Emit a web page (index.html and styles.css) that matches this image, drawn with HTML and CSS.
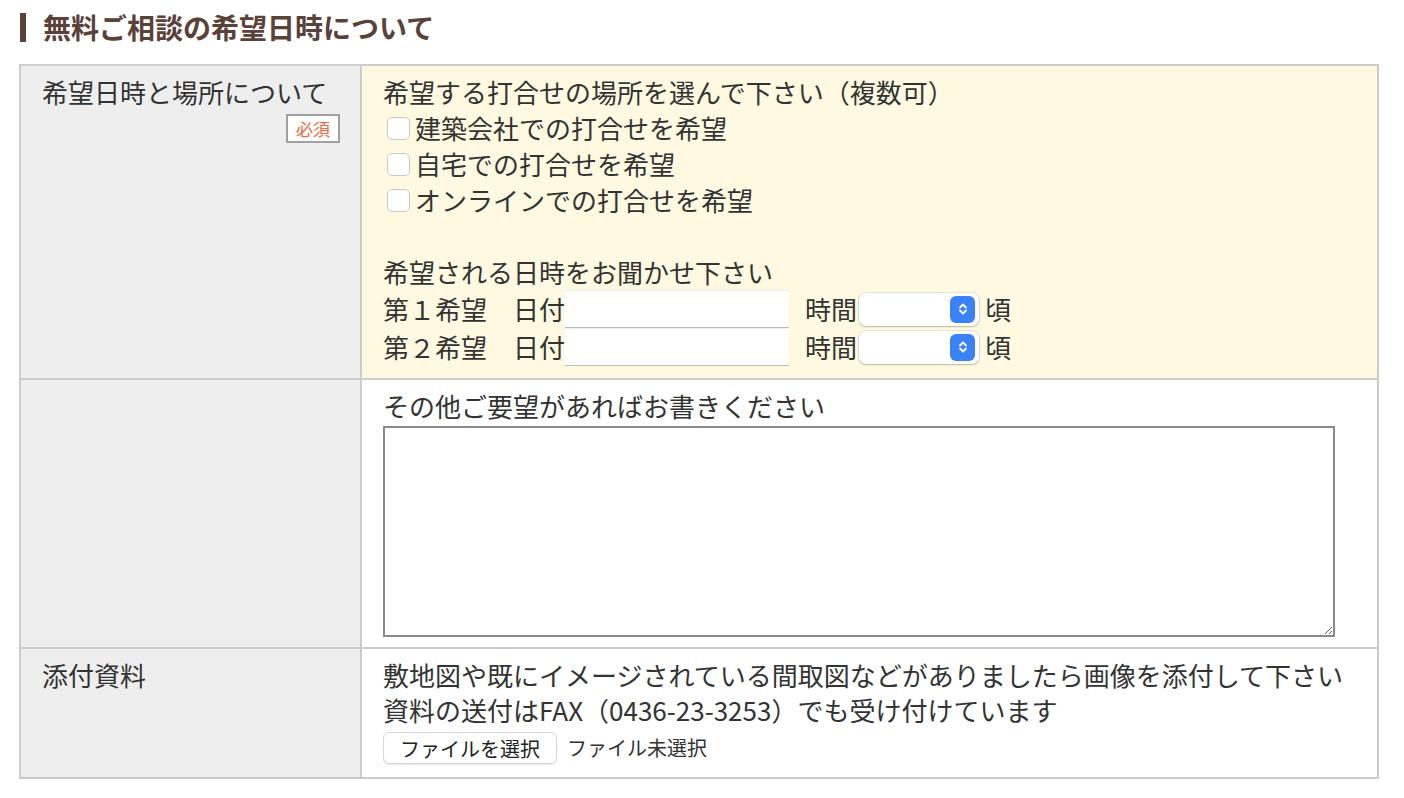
FILE: index.html
```html
<!DOCTYPE html>
<html lang="ja">
<head>
<meta charset="UTF-8" />
<meta name="viewport" content="width=device-width, initial-scale=1" />
<title>無料ご相談の希望日時について</title>
<link rel="stylesheet" href="styles.css">
</head>
<body>

<h2 class="section-title">無料ご相談の希望日時について</h2>

<table class="form-table">
  <tr>
    <th>
      希望日時と場所について
      <div class="req-wrap"><span class="required">必須</span></div>
    </th>
    <td class="highlight">
      <p>希望する打合せの場所を選んで下さい（複数可）</p>
      <label class="check"><input type="checkbox" name="place" />建築会社での打合せを希望</label>
      <label class="check"><input type="checkbox" name="place" />自宅での打合せを希望</label>
      <label class="check"><input type="checkbox" name="place" />オンラインでの打合せを希望</label>
      <p class="blank">&nbsp;</p>
      <p>希望される日時をお聞かせ下さい</p>
      <div class="date-row">
        第１希望　日付<input type="text" class="date-input" /><span class="time-label">時間</span><span class="select-wrap"><select class="time-select"><option></option></select><span class="select-arrow"><svg width="12" height="14" viewBox="0 0 12 14"><path d="M3 5.5 L6 2.5 L9 5.5 M3 8.5 L6 11.5 L9 8.5" fill="none" stroke="#fff" stroke-width="1.8" stroke-linecap="round" stroke-linejoin="round"/></svg></span></span>頃
      </div>
      <div class="date-row">
        第２希望　日付<input type="text" class="date-input" /><span class="time-label">時間</span><span class="select-wrap"><select class="time-select"><option></option></select><span class="select-arrow"><svg width="12" height="14" viewBox="0 0 12 14"><path d="M3 5.5 L6 2.5 L9 5.5 M3 8.5 L6 11.5 L9 8.5" fill="none" stroke="#fff" stroke-width="1.8" stroke-linecap="round" stroke-linejoin="round"/></svg></span></span>頃
      </div>
    </td>
  </tr>
  <tr>
    <th></th>
    <td>
      <p>その他ご要望があればお書きください</p>
      <textarea class="request"></textarea>
    </td>
  </tr>
  <tr>
    <th>添付資料</th>
    <td class="attach">
      <p>敷地図や既にイメージされている間取図などがありましたら画像を添付して下さい</p>
      <p>資料の送付はFAX（0436-23-3253）でも受け付けています</p>
      <div class="file-row">
        <button type="button" class="file-btn">ファイルを選択</button>
        <span class="file-none">ファイル未選択</span>
      </div>
    </td>
  </tr>
</table>

</body>
</html>
```

FILE: styles.css
```css
body {
  font-family: "Noto Sans CJK JP", "Noto Sans", sans-serif;
  color: #333;
  background: #fff;
  margin: 0;
  padding: 13px 0 0 20px;
}
.section-title {
  margin: 0;
  padding-left: 17px;
  border-left: 6px solid #5a4139;
  font-size: 28px;
  line-height: 29px;
  font-weight: bold;
  color: #5a4139;
}
.form-table {
  margin: 22px 0 0 -1px;
  width: 1360px;
  border-collapse: collapse;
  border: 2px solid #ccc;
  font-size: 26px;
  line-height: 36px;
}
.form-table th,
.form-table td {
  border: 2px solid #ccc;
  vertical-align: top;
  text-align: left;
}
.form-table th {
  width: 298px;
  background: #eee;
  font-weight: normal;
  padding: 8px 20px 10px 21px;
}
.form-table td {
  padding: 8px 19px 10px 21px;
}
.form-table td.highlight {
  background: #fef9e0;
  padding-bottom: 12px;
}
.form-table p {
  margin: 0;
}
.req-wrap {
  text-align: right;
  margin-top: 4px;
  line-height: 0;
}
.required {
  display: inline-block;
  width: 50px;
  height: 25px;
  line-height: 25px;
  text-align: center;
  background: #fff;
  border: 2px solid #a0a0a0;
  color: #f4663a;
  font-size: 17px;
}
.check {
  display: flex;
  align-items: center;
}
.check input {
  appearance: none;
  -webkit-appearance: none;
  width: 23px;
  height: 23px;
  margin: 0 5px 0 4px;
  border: 1px solid #c8c8c8;
  border-radius: 5px;
  background: #fff;
}
.date-row {
  display: flex;
  align-items: center;
  height: 38px;
}
.date-input {
  width: 224px;
  height: 38px;
  box-sizing: border-box;
  border: none;
  border-top: 1px solid #eee;
  border-bottom: 1px solid #bbb;
  background: #fff;
  margin: 0;
}
.time-label {
  margin-left: 16px;
  margin-right: 2px;
}
.select-wrap {
  position: relative;
  display: inline-block;
  margin-right: 6px;
}
.time-select {
  appearance: none;
  -webkit-appearance: none;
  display: block;
  width: 120px;
  height: 33px;
  border: none;
  border-radius: 7px;
  background: #fff;
  box-shadow: 0 0 0 1px rgba(0, 0, 0, 0.08), 0 1px 2px rgba(0, 0, 0, 0.2);
}
.select-arrow {
  position: absolute;
  right: 4px;
  top: 3px;
  width: 25px;
  height: 27px;
  border-radius: 6px;
  background: #3b82f6;
  display: flex;
  align-items: center;
  justify-content: center;
}
.request {
  display: block;
  width: 952px;
  height: 211px;
  box-sizing: border-box;
  margin-top: 2px;
  border: 2px solid #8a8a8a;
  border-radius: 0;
}
.attach {
  line-height: 35px;
}
.form-table td.attach {
  padding-bottom: 13px;
}
.file-row {
  display: flex;
  align-items: center;
  margin-top: 5px;
  font-size: 20px;
  line-height: 32px;
}
.file-btn {
  height: 32px;
  padding: 0 16px;
  font-family: inherit;
  font-size: 20px;
  color: #222;
  background: #fff;
  border: 1px solid #d6d6d6;
  border-radius: 6px;
  box-shadow: 0 1px 1px rgba(0, 0, 0, 0.1);
}
.file-none {
  margin-left: 10px;
}
```
